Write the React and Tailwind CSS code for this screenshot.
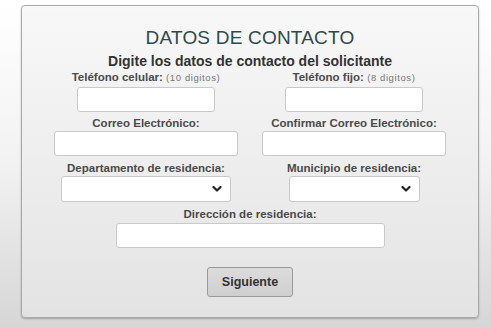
import React from 'react';

const Chevron = () => (
  <svg width="10" height="7" viewBox="0 0 10 7" className="absolute right-[8px] top-1/2 -translate-y-1/2">
    <path d="M1.5 1.5 L5 5 L8.5 1.5" fill="none" stroke="#222" strokeWidth="2.2" strokeLinecap="round" strokeLinejoin="round" />
  </svg>
);

const Field = ({ label, hint, width, height = 'h-[25px]', gap = 'mt-[3px]', select }) => (
  <div className="flex flex-col items-center">
    <div className="text-[11.5px] leading-[12px] font-bold text-[#4a4a4a] whitespace-nowrap">
      {label}
      {hint && <span className="text-[9.5px] font-normal text-[#777] tracking-[0.6px]"> {hint}</span>}
    </div>
    <div className={`relative ${gap} ${width} ${height} bg-white border border-[#c9c9c9] rounded-[3px]`}>
      {select && <Chevron />}
    </div>
  </div>
);

export default function App() {
  return (
    <div
      className="w-[491px] h-[328px] pt-[5px] pl-[21px] pr-[12px] bg-gradient-to-b from-[#ffffff] via-[#f2f2f2] to-[#d6d6d6] overflow-hidden"
      style={{ fontFamily: '"Liberation Sans", Arial, sans-serif' }}
    >
      <div className="h-[313px] rounded-[4px] border border-[#a9a9a9] bg-gradient-to-b from-[#f8f8f8] to-[#e3e3e3] shadow-[0_1px_2px_rgba(0,0,0,0.25)] pt-[21px] px-[20px] flex flex-col items-center">
        <h1 className="text-[19px] leading-[22px] text-[#2f4a4a] tracking-[0.2px]">DATOS DE CONTACTO</h1>
        <h2 className="mt-[5px] text-[14px] leading-[14px] font-bold text-[#333]">
          Digite los datos de contacto del solicitante
        </h2>

        <div className="w-full grid grid-cols-2 mt-[3px]">
          <Field label="Teléfono celular:" hint="(10 digitos)" width="w-[138px]" />
          <Field label="Teléfono fijo:" hint="(8 digitos)" width="w-[138px]" />
        </div>

        <div className="w-full grid grid-cols-2 mt-[5px]">
          <Field label="Correo Electrónico:" width="w-[184px]" gap="mt-[2px]" />
          <Field label="Confirmar Correo Electrónico:" width="w-[184px]" gap="mt-[2px]" />
        </div>

        <div className="w-full grid grid-cols-2 mt-[6px]">
          <Field label="Departamento de residencia:" width="w-[170px]" height="h-[26px]" gap="mt-[2px]" select />
          <Field label="Municipio de residencia:" width="w-[131px]" height="h-[26px]" gap="mt-[2px]" select />
        </div>

        <div className="mt-[6px]">
          <Field label="Dirección de residencia:" width="w-[269px]" />
        </div>

        <button className="mt-[19px] w-[86px] h-[30px] rounded-[3px] border border-[#9a9a9a] bg-gradient-to-b from-[#dcdcdc] to-[#cfcfcf] text-[12.5px] font-bold text-[#333]">
          Siguiente
        </button>
      </div>
    </div>
  );
}
